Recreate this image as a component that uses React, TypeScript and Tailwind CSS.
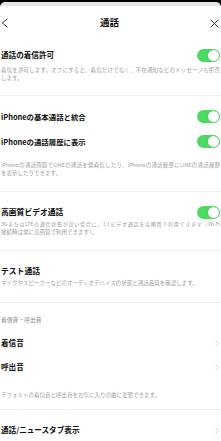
import React from "react";

const font = { fontFamily: '"Noto Sans CJK JP", "Noto Sans", sans-serif' };

function Toggle() {
  return (
    <div className="w-[23px] h-[13px] rounded-full bg-[#4cd964] flex items-center justify-end pr-[1px] shrink-0">
      <div className="w-[11px] h-[11px] rounded-full bg-white shadow-[0_0_1px_rgba(0,0,0,0.3)]" />
    </div>
  );
}

function Chevron() {
  return (
    <svg width="4" height="7" viewBox="0 0 4 7" className="shrink-0">
      <path d="M0.6 0.6 L3.3 3.5 L0.6 6.4" fill="none" stroke="#c4c4c4" strokeWidth="0.8" />
    </svg>
  );
}

function Sep({ mt }: { mt: string }) {
  return <div className={`h-px bg-[#f1f1f1] ${mt}`} />;
}

export default function App() {
  return (
    <div className="w-[221px] h-[441px] bg-black overflow-hidden" style={font}>
      <div className="mt-[2px] bg-[#e4e4e4] rounded-t-[5px] pt-[4px] h-[439px]">
        <div className="bg-white h-[435px] text-[#111]">
          {/* header */}
          <div className="h-[34px] flex items-center justify-between pl-[1px] pr-[2px]">
            <svg width="8" height="10" viewBox="0 0 8 10">
              <path d="M6.5 0.8 L1.3 5 L6.5 9.2" fill="none" stroke="#222" strokeWidth="0.9" />
            </svg>
            <div className="text-[9.5px] font-semibold leading-none">通話</div>
            <svg width="9" height="9" viewBox="0 0 9 9">
              <path d="M0.7 0.7 L8.3 8.3 M8.3 0.7 L0.7 8.3" fill="none" stroke="#222" strokeWidth="0.9" />
            </svg>
          </div>

          {/* section 1 */}
          <div className="mt-[7px] h-[16px] flex items-center justify-between pl-[1px] pr-[1px]">
            <div className="text-[7.6px] font-bold leading-none">通話の着信許可</div>
            <Toggle />
          </div>
          <div className="mt-[3px] pl-[1px] pr-[1px] text-[5.5px] leading-[8px] text-[#a0a0a0]">
            <div className="whitespace-nowrap text-justify [text-align-last:justify]">着信を許可します。オフにすると、着信だけでなく、不在通知などのメッセージも拒否</div>
            <div className="whitespace-nowrap">します。</div>
          </div>
          <Sep mt="mt-[13px]" />

          {/* iPhone */}
          <div className="mt-[8px] h-[25px] flex items-center justify-between pl-[1px] pr-[1px]">
            <div className="text-[7.4px] font-bold leading-none">iPhoneの基本通話と統合</div>
            <Toggle />
          </div>
          <div className="h-[25px] flex items-center justify-between pl-[1px] pr-[1px]">
            <div className="text-[7.4px] font-bold leading-none">iPhoneの通話履歴に表示</div>
            <Toggle />
          </div>
          <div className="mt-[7px] pl-[1px] pr-[1px] text-[5.5px] leading-[8px] text-[#a0a0a0]">
            <div className="whitespace-nowrap text-justify [text-align-last:justify] text-[5.4px]">iPhoneの通話画面でLINEの通話を発着信したり、iPhoneの通話履歴にLINEの通話履歴</div>
            <div className="whitespace-nowrap">を表示したりできます。</div>
          </div>
          <Sep mt="mt-[14px]" />

          {/* video */}
          <div className="mt-[12px] h-[16px] flex items-center justify-between pl-[1px] pr-[1px]">
            <div className="text-[7.8px] font-bold leading-none">高画質ビデオ通話</div>
            <Toggle />
          </div>
          <div className="pl-[1px] pr-[1px] text-[5.5px] leading-[8px] text-[#a0a0a0]">
            <div className="whitespace-nowrap text-justify [text-align-last:justify] text-[5.1px]">3GまたはLTEの通信状態が良い場合に、1:1ビデオ通話を高画質で利用できます（Wi-Fi</div>
            <div className="whitespace-nowrap">接続時は常に高画質で利用できます）。</div>
          </div>
          <Sep mt="mt-[14px]" />

          {/* test */}
          <div className="mt-[12px] h-[16px] flex items-center pl-[1px]">
            <div className="text-[7.8px] font-bold leading-none">テスト通話</div>
          </div>
          <div className="pl-[1px] text-[5.5px] leading-[8px] text-[#a0a0a0] whitespace-nowrap">
            マイクやスピーカーなどのオーディオデバイスの状態と通話品質を確認します。
          </div>
          <Sep mt="mt-[15px]" />

          {/* ringtones */}
          <div className="mt-[13px] pl-[1px] text-[5.8px] leading-[8px] text-[#8a8a8a] whitespace-nowrap">
            着信音・呼出音
          </div>
          <div className="mt-[7px] h-[24px] flex items-center justify-between pl-[1px] pr-[2px]">
            <div className="text-[7.6px] font-bold leading-none">着信音</div>
            <Chevron />
          </div>
          <div className="h-[24px] flex items-center justify-between pl-[1px] pr-[2px]">
            <div className="text-[7.6px] font-bold leading-none">呼出音</div>
            <Chevron />
          </div>
          <div className="mt-[12px] pl-[1px] text-[5.5px] leading-[8px] text-[#a0a0a0] whitespace-nowrap">
            デフォルトの着信音と呼出音をお気に入りの曲に変更できます。
          </div>
          <Sep mt="mt-[10px]" />

          <div className="mt-[8px] h-[24px] flex items-center justify-between pl-[1px] pr-[2px]">
            <div className="text-[7.6px] font-bold leading-none">通話/ニュースタブ表示</div>
            <Chevron />
          </div>
        </div>
      </div>
    </div>
  );
}
